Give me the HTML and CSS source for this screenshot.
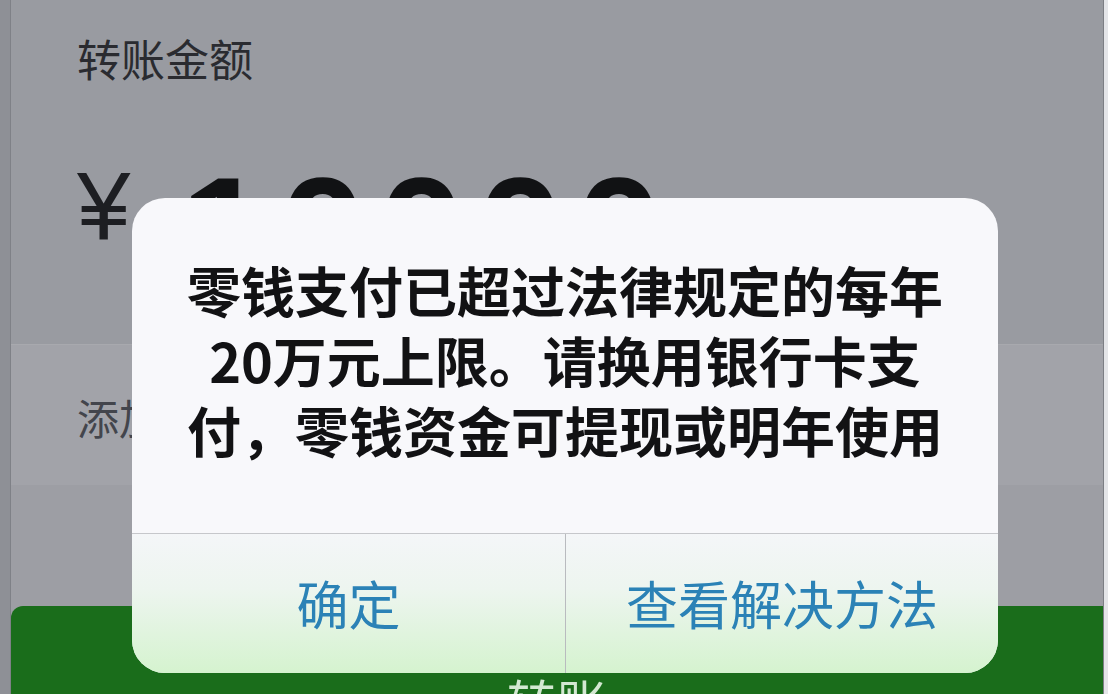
FILE: index.html
```html
<!DOCTYPE html>
<html lang="zh-CN">
<head>
<meta charset="utf-8">
<title>转账</title>
<link rel="stylesheet" href="styles.css">
</head>
<body>

<div class="edge"></div>

<div class="screen">
	<div class="card">
		<div class="amount-block">
			<div class="label">转账金额</div>
			<div class="amount">
				<span class="currency">¥</span>
				<span class="digits">10000</span>
			</div>
		</div>
		<div class="note-row">添加转账说明</div>
	</div>

	<div class="pay-button">转账</div>

	<!-- alert shown over the transfer form -->
	<div class="alert">
		<div class="alert-msg">
			零钱支付已超过法律规定的每年<br>
			20万元上限。请换用银行卡支<br>
			付，零钱资金可提现或明年使用
		</div>
		<div class="alert-actions">
			<div class="alert-btn">确定</div>
			<div class="alert-btn">查看解决方法</div>
		</div>
	</div>
</div>

<div class="edge edge-right"></div>

</body>
</html>
```

FILE: styles.css
```css
body {
	margin: 0;
	height: 694px;
	overflow: hidden;
	display: flex;
	background: #8e9096;
	font-family: "Noto Sans CJK SC", "Liberation Sans", sans-serif;
}

.edge {
	width: 10px;
	flex: none;
}

.edge-right {
	flex: 1;
	background: #e4e5e8;
}

.screen {
	position: relative;
	width: 1092px;
	flex: none;
	border-left: 1px solid #7f8187;
	border-right: 1px solid #7c7e84;
	background: #9d9ea4;
	overflow: hidden;
}

/* form card */

.card {
	height: 485px;
	display: flex;
	flex-direction: column;
}

.amount-block {
	height: 344px;
	padding-left: 66px;
	background: #999ba1;
	border-bottom: 1px solid #a8a9ae;
}

.label {
	padding-top: 30px;
	font-size: 44px;
	line-height: 56px;
	color: #2a2b30;
}

.amount {
	display: flex;
	align-items: flex-start;
	margin-top: 82px;
}

.currency {
	font-family: "Liberation Sans", sans-serif;
	font-size: 96px;
	line-height: 1;
	color: #1d1e22;
	margin-top: -10px;
}

.digits {
	font-family: "Liberation Sans", sans-serif;
	font-weight: bold;
	font-size: 156px;
	line-height: 1;
	letter-spacing: 12px;
	color: #111214;
	margin-left: 50px;
	margin-top: -14px;
}

.note-row {
	flex: 1;
	padding-left: 66px;
	padding-top: 46px;
	background: #a2a3a9;
	font-size: 42px;
	line-height: 52px;
	color: #43454c;
}

/* green submit button under the mask */

.pay-button {
	margin-top: 121px;
	height: 120px;
	border-radius: 12px 0 0 0;
	background: #1a6d1b;
	text-align: center;
	font-size: 50px;
	line-height: 60px;
	padding-top: 64px;
	color: #d3e8d2;
}

/* alert dialog */

.alert {
	position: absolute;
	left: 121px;
	top: 198px;
	width: 866px;
	height: 475px;
	border-radius: 33px;
	overflow: hidden;
	background: #f8f8fb;
	display: flex;
	flex-direction: column;
}

.alert-msg {
	height: 335px;
	box-sizing: border-box;
	padding-bottom: 11px;
	display: flex;
	align-items: center;
	justify-content: center;
	text-align: center;
	font-size: 54px;
	font-weight: bold;
	line-height: 70px;
	color: #121214;
}

.alert-actions {
	flex: 1;
	display: grid;
	grid-template-columns: 1fr 1fr;
	border-top: 1px solid #c6c7cb;
	background: linear-gradient(#f4f6f8 0%, #edf5ef 40%, #d5f3cf 100%);
}

.alert-btn {
	display: flex;
	align-items: center;
	justify-content: center;
	font-size: 52px;
	color: #2b82b6;
	padding-bottom: 2px;
}

.alert-btn + .alert-btn {
	border-left: 1px solid #b9bbbf;
}
```
